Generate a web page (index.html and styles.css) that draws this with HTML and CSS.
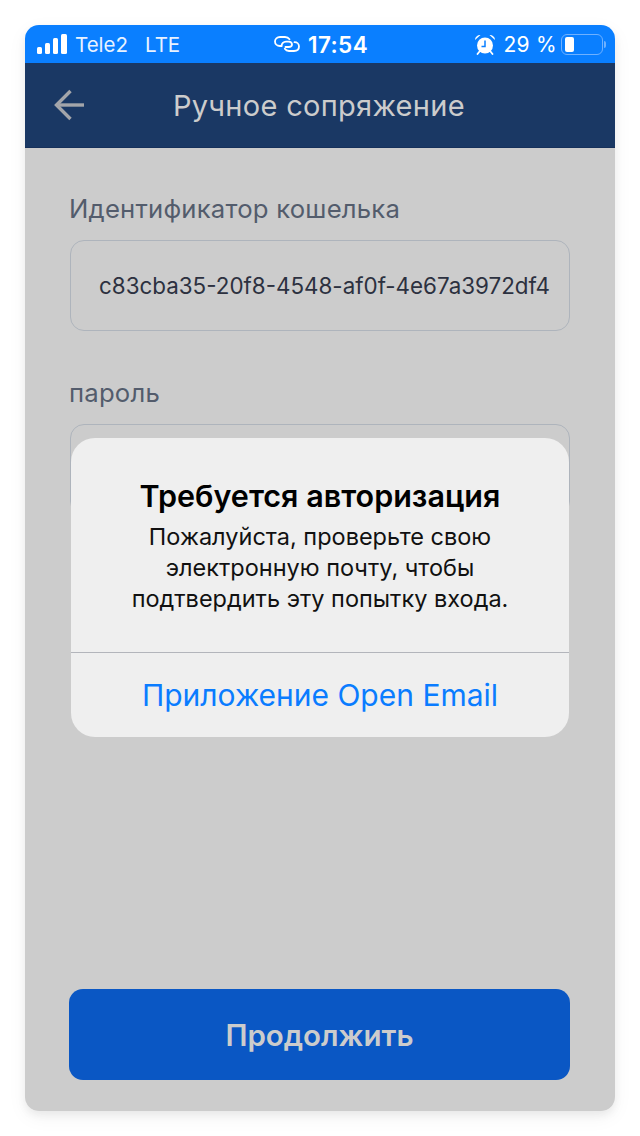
FILE: index.html
```html
<!DOCTYPE html>
<html lang="ru">
<head>
<meta charset="utf-8">
<title>Ручное сопряжение</title>
<link rel="stylesheet" href="styles.css">
</head>
<body>
<div class="phone">
  <div class="status">
    <div class="status-left">
      <svg class="signal" width="31" height="20" viewBox="0 0 31 20"><rect x="0" y="13" width="5" height="7" rx="1.500"/><rect x="8" y="9" width="5" height="11" rx="1.500"/><rect x="16" y="4" width="5" height="16" rx="1.500"/><rect x="24" y="0" width="6" height="20" rx="1.500"/></svg>
      <span class="carrier">Tele2</span>
      <span class="net">LTE</span>
    </div>
    <div class="status-center">
      <svg class="link" width="26" height="16" viewBox="0 0 26 16" fill="none" stroke="#fff" stroke-width="1.800" stroke-linecap="round"><path d="M15.500 3.200C14.500 1.800 13 1 11 1H6C3 1 1 3 1 5.500S3 10 6 10H7.500"/><path d="M7.500 10C7.500 7.500 9.500 5.600 12 5.600H14.500C16.500 5.600 18 6.800 18 8.500C18 10.200 16.500 11 14.500 11H11.500"/><path d="M10.800 12.800C11.800 14.300 13 15 15 15H20C23 15 25 13.200 25 10.500S23 6.200 20.500 6.200"/></svg>
      <span class="time">17:54</span>
    </div>
    <div class="status-right">
      <svg class="alarm" width="22" height="21" viewBox="0 0 22 21"><circle cx="11" cy="11.500" r="8" fill="#fff"/><path d="M11 6.500V12.500H7.500" fill="none" stroke="#0a7fff" stroke-width="1.500"/><path d="M1 6C1 3 3.500 1 6.500 1Z" fill="#fff"/><path d="M21 6C21 3 18.500 1 15.500 1Z" fill="#fff"/><path d="M5.500 17.500L3.500 20M16.500 17.500L18.500 20" stroke="#fff" stroke-width="1.800" stroke-linecap="round"/></svg>
      <span class="percent">29 %</span>
      <div class="battery"><div class="battery-fill"></div></div>
      <div class="battery-tip"></div>
    </div>
  </div>
  <header class="header">
    <svg class="back" width="32" height="32" viewBox="0 0 32 32" fill="none" stroke="#a3a5aa" stroke-width="3.400"><path d="M30 16H3"/><path d="M16.500 2L2.500 16L16.500 30"/></svg>
    <h1 class="title">Ручное сопряжение</h1>
  </header>
  <main class="content">
    <div class="fields">
      <div class="field">
        <label class="label">Идентификатор кошелька</label>
        <div class="input">c83cba35-20f8-4548-af0f-4e67a3972df4</div>
      </div>
      <div class="field">
        <label class="label">пароль</label>
        <div class="input"></div>
      </div>
    </div>
    <button class="continue">Продолжить</button>
  </main>
  <div class="alert">
    <div class="alert-body">
      <h2 class="alert-title">Требуется авторизация</h2>
      <p class="alert-text">Пожалуйста, проверьте свою<br>электронную почту, чтобы<br>подтвердить эту попытку входа.</p>
    </div>
    <div class="alert-action">Приложение Open Email</div>
  </div>
</div>
</body>
</html>
```
FILE: styles.css
```css
* { box-sizing: border-box; }
html, body { margin: 0; height: 100%; background: #fff; }
body {
  width: 640px;
  height: 1136px;
  padding: 25px;
  overflow: hidden;
  font-family: Inter, "Noto Sans", sans-serif;
}
.phone {
  position: relative;
  width: 590px;
  height: 1086px;
  display: flex;
  flex-direction: column;
  border-radius: 14px;
  box-shadow: 0 4px 8px rgba(0, 0, 0, 0.06), 0 6px 20px rgba(0, 0, 0, 0.05);
}
.status {
  height: 38px;
  flex: none;
  display: flex;
  align-items: center;
  justify-content: space-between;
  padding: 0 9px 0 12px;
  background: #0a7fff;
  border-radius: 14px 14px 0 0;
  color: #fff;
  position: relative;
}
.status-left { display: flex; align-items: center; }
.signal { fill: #fff; margin-right: 7px; }
.carrier { font-size: 20.500px; color: #e8f2ff; }
.net { font-size: 20.500px; margin-left: 17px; color: #e8f2ff; }
.status-center {
  position: absolute;
  left: 249px;
  top: 0;
  height: 38px;
  display: flex;
  align-items: center;
  gap: 8px;
}
.time { font-size: 22.500px; font-weight: 600; letter-spacing: 0.4px; }
.status-right { display: flex; align-items: center; }
.alarm { margin-right: 7px; }
.percent { font-size: 21px; margin-right: 4px; letter-spacing: 0.3px; }
.battery {
  width: 42px;
  height: 21px;
  border: 1.500px solid #6fb1ff;
  border-radius: 6px;
  padding: 2px 3px;
}
.battery-fill { width: 9px; height: 100%; background: #fff; border-radius: 2px; }
.battery-tip { width: 2px; height: 7px; margin-left: 1px; background: #6fb1ff; border-radius: 0 2px 2px 0; }
.header {
  height: 85px;
  flex: none;
  display: flex;
  align-items: center;
  background: #1a3864;
  padding-left: 29px;
  border-bottom: 1px solid #16305a;
}
.back { flex: none; }
.title {
  margin: 0 0 0 87px;
  font-size: 29px;
  font-weight: 400;
  color: #cccccc;
  letter-spacing: 0.3px;
  white-space: nowrap;
}
.content {
  flex: 1;
  display: flex;
  flex-direction: column;
  justify-content: space-between;
  padding: 43px 45px 31px 44px;
  background: #cccccc;
  border-radius: 0 0 14px 14px;
}
.fields { display: flex; flex-direction: column; gap: 44px; }
.field { display: flex; flex-direction: column; gap: 14px; }
.label {
  font-size: 25.700px;
  line-height: 35px;
  color: #535c6c;
  letter-spacing: 0.2px;
}
.input {
  height: 91px;
  padding: 0 19px 0 28px;
  display: flex;
  align-items: center;
  border: 1.500px solid #aeb4bc;
  border-radius: 14px;
  margin-left: 1px;
  font-size: 22.400px;
  color: #2c3140;
  white-space: nowrap;
}
.continue {
  height: 91px;
  width: 501px;
  border: 0;
  border-radius: 14px;
  background: #0a57c4;
  color: #cccccc;
  font-family: inherit;
  font-size: 29.500px;
  font-weight: 600;
}
.alert {
  position: absolute;
  left: 46px;
  top: 413px;
  width: 498px;
  height: 299px;
  display: flex;
  flex-direction: column;
  background: #efefef;
  border-radius: 24px;
}
.alert-body {
  height: 215px;
  flex: none;
  padding-top: 40px;
  text-align: center;
  border-bottom: 1px solid #b3b5bb;
}
.alert-title {
  margin: 0;
  font-size: 30.500px;
  line-height: 36px;
  font-weight: 600;
  color: #000;
}
.alert-text {
  margin: 7px 0 0;
  font-size: 23.500px;
  line-height: 31px;
  color: #111;
}
.alert-action {
  flex: 1;
  display: flex;
  align-items: center;
  justify-content: center;
  font-size: 30px;
  color: #0a7cff;
}
```
